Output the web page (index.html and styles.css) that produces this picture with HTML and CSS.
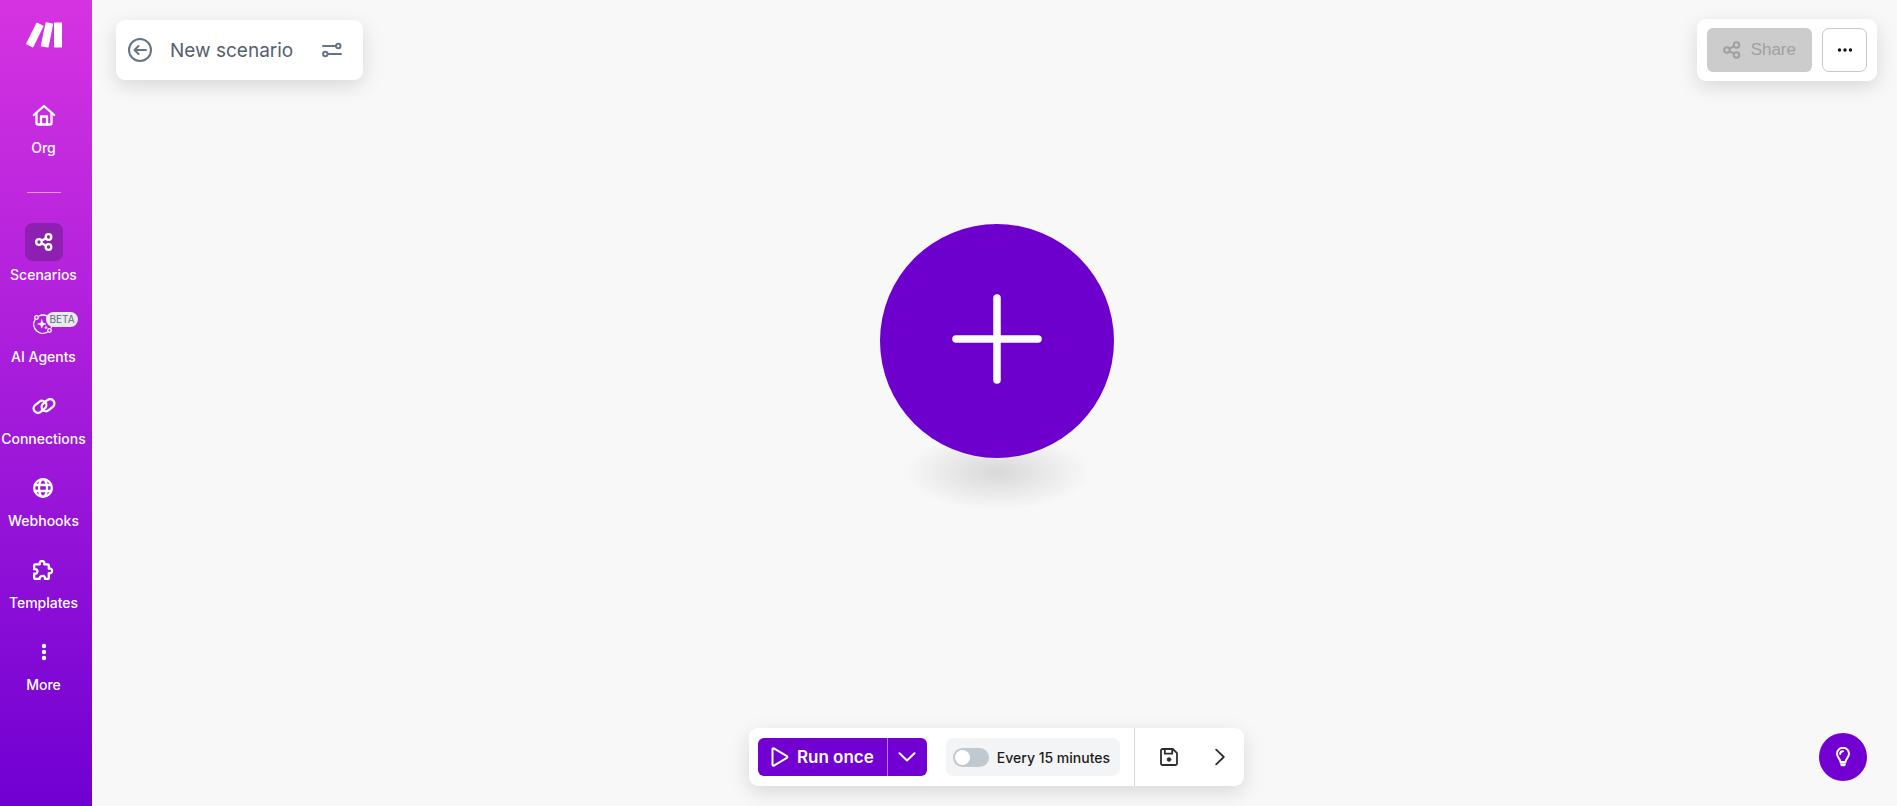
FILE: index.html
```
<!DOCTYPE html>
<html lang="en">
<head>
    <meta charset="UTF-8">
    <meta name="viewport" content="width=device-width, initial-scale=1.0">
    <title>New scenario</title>
    <link rel="stylesheet" href="styles.css">
</head>
<body>
    <nav class="sidebar">
        <a href="#" class="logo" aria-label="Home">
            <svg width="36" height="26" viewBox="0 0 36 26" fill="#fff">
                <path d="M11.4.8 17 3.6a.8.8 0 0 1 .4 1L7.4 25a.8.8 0 0 1-1 .3L.6 22.500a.8.8 0 0 1-.4-1L10.400 1.100a.8.8 0 0 1 1-.3z"/>
                <path d="M20.500.3l6 1.200a.8.8 0 0 1 .6 1l-4.500 22.500a.8.8 0 0 1-.9.6l-6.200-1.200a.8.8 0 0 1-.6-1L19.500.9a.8.8 0 0 1 1-.6z"/>
                <rect x="28" y="0.500" width="8" height="25" rx="0.700"/>
            </svg>
        </a>
        <a href="#" class="nav-item">
            <span class="nav-icon">
                <svg width="24" height="24" viewBox="0 0 24 24" class="line-icon">
                    <path d="M1.800 12 12 3l10.200 9"/>
                    <path d="M4.500 10.500V20a1.500 1.500 0 0 0 1.500 1.500h12a1.500 1.500 0 0 0 1.500-1.500v-9.500"/>
                    <path d="M9 21v-7.500h6V21"/>
                </svg>
            </span>
            <span class="nav-label">Org</span>
        </a>
        <hr class="nav-divider">
        <a href="#" class="nav-item active">
            <span class="nav-icon">
                <svg width="18" height="18" viewBox="0 0 18 18" class="line-icon">
                    <circle cx="4" cy="9" r="2.800"/>
                    <circle cx="13.500" cy="4" r="2.800"/>
                    <circle cx="13.500" cy="14" r="2.800"/>
                    <path d="M6.600 7.700 11 5.300M6.600 10.300l4.400 2.400"/>
                </svg>
            </span>
            <span class="nav-label">Scenarios</span>
        </a>
        <a href="#" class="nav-item">
            <span class="nav-icon">
                <svg width="20" height="20" viewBox="0 0 20 20" class="line-icon thin">
                    <path d="M6.200 1.800A9 9 0 0 1 18.800 9.500M18.700 12.500l-.3 1M14.500 18A9 9 0 0 1 2 5.800"/>
                    <circle cx="3.500" cy="3.500" r="1.800"/>
                    <circle cx="16.500" cy="16.500" r="1.800"/>
                    <path class="solid" d="M8.800 5.800 9.900 8.900 13 10 9.900 11.100 8.800 14.200 7.700 11.100 4.600 10 7.700 8.900z"/>
                    <path class="solid" d="M13 12.200l.4 1 1 .4-1 .4-.4 1-.4-1-1-.4 1-.4z"/>
                </svg>
                <span class="badge">BETA</span>
            </span>
            <span class="nav-label">AI Agents</span>
        </a>
        <a href="#" class="nav-item">
            <span class="nav-icon">
                <svg width="24" height="20" viewBox="0 0 24 20" class="line-icon">
                    <rect x="1" y="6.500" width="14" height="8.600" rx="4.300" transform="rotate(-40 8 10.800)"/>
                    <rect x="9" y="4.900" width="14" height="8.600" rx="4.300" transform="rotate(-40 16 9.200)"/>
                </svg>
            </span>
            <span class="nav-label">Connections</span>
        </a>
        <a href="#" class="nav-item">
            <span class="nav-icon">
                <svg width="20" height="20" viewBox="0 0 20 20" class="line-icon">
                    <circle cx="10" cy="10" r="8.800"/>
                    <ellipse cx="10" cy="10" rx="4" ry="8.800"/>
                    <path d="M1.800 7h16.400M1.800 13h16.400"/>
                </svg>
            </span>
            <span class="nav-label">Webhooks</span>
        </a>
        <a href="#" class="nav-item">
            <span class="nav-icon">
                <svg width="20" height="20" viewBox="0 0 20 20" class="line-icon">
                    <path d="M1.200 5.300a1 1 0 0 1 1-1h4.600c-.6-2 .5-3.300 2.200-3.300s2.800 1.300 2.200 3.300h3.600a1 1 0 0 1 1 1v3.400c2-.6 3.300.5 3.300 2.200s-1.300 2.800-3.300 2.200V18a1 1 0 0 1-1 1h-2.900c.4-2-.7-3.100-2.200-3.100S6.200 17 6.600 19H2.200a1 1 0 0 1-1-1v-4.400c2 .4 3.300-.6 3.300-2.200S3.200 8.800 1.200 9.200z"/>
                </svg>
            </span>
            <span class="nav-label">Templates</span>
        </a>
        <a href="#" class="nav-item">
            <span class="nav-icon">
                <svg width="6" height="18" viewBox="0 0 6 18" fill="#fff">
                    <circle cx="3" cy="3" r="2.200"/>
                    <circle cx="3" cy="9" r="2.200"/>
                    <circle cx="3" cy="15" r="2.200"/>
                </svg>
            </span>
            <span class="nav-label">More</span>
        </a>
    </nav>

    <main class="editor">
        <header class="topbar">
            <div class="panel title-panel">
                <button type="button" class="icon-btn" aria-label="Back">
                    <svg width="24" height="24" viewBox="0 0 24 24" class="line-icon">
                        <circle cx="12" cy="12" r="11"/>
                        <path d="M18 12H6.500M10.500 8 6.500 12l4 4"/>
                    </svg>
                </button>
                <h1 class="title">New scenario</h1>
                <button type="button" class="icon-btn" aria-label="Scenario settings">
                    <svg width="20" height="16" viewBox="0 0 20 16" class="line-icon">
                        <path d="M1 4h13M6 12h13"/>
                        <circle cx="16.300" cy="4" r="2.200"/>
                        <circle cx="3.300" cy="12" r="2.200"/>
                    </svg>
                </button>
            </div>
            <div class="panel share-panel">
                <button type="button" class="share-btn" disabled>
                    <svg width="18" height="18" viewBox="0 0 18 18" class="line-icon">
                        <circle cx="4" cy="9" r="2.800"/>
                        <circle cx="13.500" cy="4" r="2.800"/>
                        <circle cx="13.500" cy="14" r="2.800"/>
                        <path d="M6.600 7.700 11 5.300M6.600 10.300l4.400 2.400"/>
                    </svg>
                    Share
                </button>
                <button type="button" class="more-btn" aria-label="More options">
                    <svg width="16" height="4" viewBox="0 0 16 4" fill="#111">
                        <circle cx="2.500" cy="2" r="1.700"/>
                        <circle cx="8" cy="2" r="1.700"/>
                        <circle cx="13.500" cy="2" r="1.700"/>
                    </svg>
                </button>
            </div>
        </header>

        <section class="stage">
            <button type="button" class="add-module" aria-label="Add module">
                <svg width="90" height="90" viewBox="0 0 90 90">
                    <path d="M45 4v82M4 45h82" stroke="#fff" stroke-width="7.500" stroke-linecap="round"/>
                </svg>
            </button>
        </section>

        <footer class="bottombar">
            <div class="panel controls">
                <div class="run-group">
                    <button type="button" class="run-btn">
                        <svg width="18" height="20" viewBox="0 0 18 20" class="line-icon">
                            <path d="M1.500 2.200v15.600c0 .8.800 1.200 1.400.8l13-7.800c.6-.4.600-1.200 0-1.600l-13-7.800c-.6-.4-1.400 0-1.400.8z"/>
                        </svg>
                        Run once
                    </button>
                    <button type="button" class="run-menu" aria-label="Run options">
                        <svg width="18" height="10" viewBox="0 0 18 10" class="line-icon">
                            <path d="M1.500 1.200 9 8.500l7.500-7.300"/>
                        </svg>
                    </button>
                </div>
                <label class="schedule">
                    <input type="checkbox" class="toggle">
                    Every 15 minutes
                </label>
                <div class="tools">
                    <button type="button" class="icon-btn" aria-label="Save">
                        <svg width="18" height="18" viewBox="0 0 18 18" class="line-icon">
                            <path d="M2.500 1h10.300L17 5.200v10.300a1.500 1.500 0 0 1-1.500 1.500h-13A1.500 1.500 0 0 1 1 15.500v-13A1.500 1.500 0 0 1 2.500 1z"/>
                            <path d="M4.800 1v4.700h7.400V1"/>
                            <circle class="solid" cx="9" cy="11.500" r="2"/>
                        </svg>
                    </button>
                    <button type="button" class="icon-btn" aria-label="Expand tools">
                        <svg width="10" height="18" viewBox="0 0 10 18" class="line-icon">
                            <path d="M1.200 1.700 8.800 9l-7.600 7.300"/>
                        </svg>
                    </button>
                </div>
            </div>
            <button type="button" class="help-btn" aria-label="Help">
                <svg width="14" height="20" viewBox="0 0 14 20" class="line-icon">
                    <path d="M4.500 15c0-3-3.500-4.500-3.500-8.300a6 6 0 0 1 12 0c0 3.800-3.500 5.300-3.500 8.300z"/>
                    <path d="M4.200 7A2.800 2.800 0 0 1 7 4.200"/>
                    <path class="solid" d="M4.500 16.500h5v1.200a1.500 1.500 0 0 1-1.500 1.300H6a1.500 1.500 0 0 1-1.500-1.300z"/>
                </svg>
            </button>
        </footer>
    </main>
</body>
</html>
```

FILE: styles.css
```
* {
    box-sizing: border-box;
}
body {
    margin: 0;
    min-height: 100vh;
    display: flex;
    font-family: Inter, sans-serif;
    background-color: #f8f8f8;
}
svg {
    display: block;
    flex: none;
}
button {
    display: flex;
    align-items: center;
    justify-content: center;
    padding: 0;
    border: none;
    background: none;
    font-family: inherit;
    cursor: pointer;
}
.line-icon {
    fill: none;
    stroke: currentColor;
    stroke-width: 2;
    stroke-linecap: round;
    stroke-linejoin: round;
}
.sidebar .line-icon {
    stroke-width: 2.3;
}
.sidebar .line-icon.thin {
    stroke-width: 1.3;
}
.line-icon .solid {
    fill: currentColor;
    stroke-width: 0.5;
}

/* Sidebar */
.sidebar {
    flex: none;
    width: 92px;
    padding: 22px 5px 0 0;
    display: flex;
    flex-direction: column;
    align-items: center;
    background: linear-gradient(#d633e1 0%, #9c17d9 58%, #7000d2 100%);
}
.logo {
    margin-bottom: 48px;
}
.nav-item {
    display: flex;
    flex-direction: column;
    align-items: center;
    gap: 5px;
    margin-bottom: 21px;
    color: #fff;
    text-decoration: none;
}
.nav-icon {
    position: relative;
    width: 38px;
    height: 38px;
    display: flex;
    align-items: center;
    justify-content: center;
    border-radius: 8px;
}
.active .nav-icon {
    background-color: #8d20b0;
}
.nav-label {
    font-size: 14px;
    line-height: 18px;
    font-weight: 500;
}
.nav-divider {
    width: 34px;
    height: 1px;
    margin: 14px 0 30px;
    border: none;
    background-color: rgba(255, 255, 255, 0.5);
}
.badge {
    position: absolute;
    left: 22px;
    top: 7px;
    padding: 0 3px;
    border-radius: 8px;
    background-color: #e9ecef;
    color: #5c6b7a;
    font-size: 10px;
    line-height: 15px;
}

/* Editor */
.editor {
    flex: 1;
    display: flex;
    flex-direction: column;
    padding: 19px 20px 20px 24px;
}
.panel {
    display: flex;
    align-items: center;
    border-radius: 9px;
    background-color: #fff;
    box-shadow: 0 6px 20px rgba(0, 0, 0, 0.13);
}
.topbar {
    display: flex;
    align-items: center;
    justify-content: space-between;
}
.title-panel {
    height: 60px;
    padding: 0 21px 0 12px;
    color: #647587;
}
.title {
    margin: 0 29px 0 18px;
    font-size: 19px;
    font-weight: 400;
    color: #54606c;
}
.title-panel .icon-btn {
    color: inherit;
}
.share-panel {
    gap: 10px;
    padding: 9px 10px;
}
.share-btn {
    height: 44px;
    gap: 10px;
    padding: 0 16px;
    border-radius: 6px;
    background-color: #ccc;
    color: #a0a0a0;
    font-family: "Liberation Sans", Arial, sans-serif;
    font-size: 17px;
    cursor: default;
}
.more-btn {
    width: 45px;
    height: 44px;
    border: 1px solid #c1cad3;
    border-radius: 7px;
}

/* Canvas */
.stage {
    flex: 1;
    display: flex;
    align-items: center;
    justify-content: center;
    padding-bottom: 128px;
}
.add-module {
    position: relative;
    width: 234px;
    height: 234px;
    padding-bottom: 3px;
    border-radius: 50%;
    background-color: #6d00cc;
}
.add-module::after {
    content: "";
    position: absolute;
    z-index: -1;
    left: 24px;
    right: 24px;
    bottom: -52px;
    height: 76px;
    background: radial-gradient(closest-side, #d8d8d8, #f8f8f8);
}

/* Bottom bar */
.bottombar {
    display: grid;
    grid-template-columns: 1fr auto 1fr;
    align-items: center;
}
.controls {
    grid-column: 2;
    height: 58px;
    padding-left: 9px;
}
.run-group {
    display: flex;
    height: 38px;
    border-radius: 6px;
    overflow: hidden;
    color: #fff;
}
.run-btn {
    gap: 8px;
    padding: 0 13px;
    background-color: #7300d2;
    color: #fff;
    font-size: 17px;
    font-weight: 600;
}
.run-menu {
    width: 40px;
    border-left: 1px solid #b67be6;
    background-color: #7300d2;
    color: #fff;
}
.schedule {
    display: flex;
    align-items: center;
    gap: 8px;
    height: 38px;
    margin: 0 14px 0 19px;
    padding: 0 10px 0 7px;
    border-radius: 7px;
    background-color: #f3f4f6;
    color: #1c1c1c;
    font-size: 14px;
    font-weight: 500;
}
.toggle {
    appearance: none;
    width: 36px;
    height: 19px;
    margin: 0;
    padding: 2px;
    border-radius: 10px;
    background-color: #c1c9d0;
}
.toggle::before {
    content: "";
    display: block;
    width: 15px;
    height: 15px;
    border-radius: 50%;
    background-color: #fff;
}
.toggle:checked {
    background-color: #7300d2;
}
.tools {
    display: flex;
    align-items: center;
    gap: 37px;
    height: 100%;
    padding: 0 19px 0 25px;
    border-left: 1px solid #d3d7db;
    color: #2d2d2d;
}
.tools .icon-btn {
    color: inherit;
}
.tools .line-icon {
    stroke-width: 1.8;
}
.help-btn {
    justify-self: end;
    width: 48px;
    height: 48px;
    margin-right: 10px;
    border-radius: 50%;
    background-color: #7300d2;
    color: #fff;
}
```
